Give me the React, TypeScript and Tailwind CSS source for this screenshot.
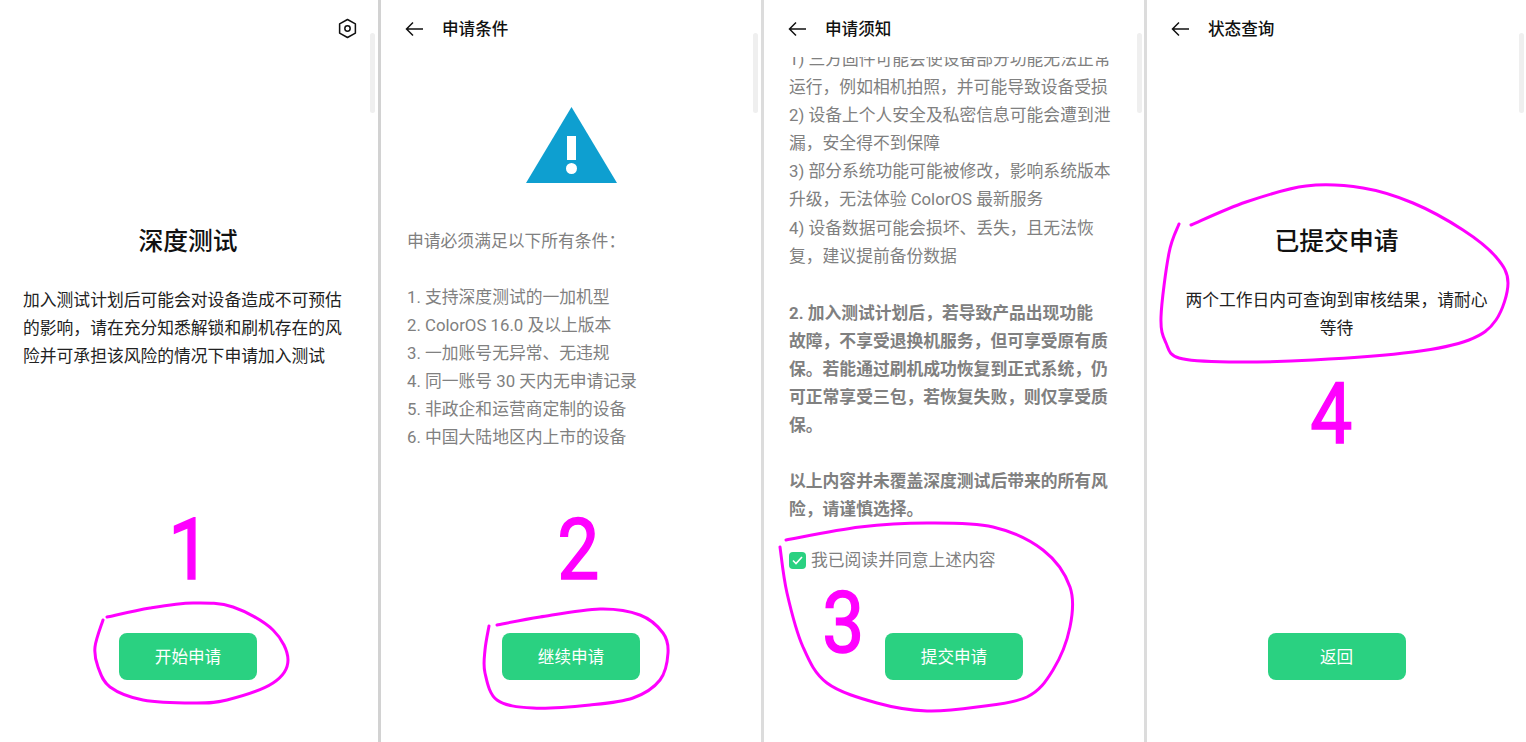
import type { ReactNode } from 'react';

const FONT = 'font-["Roboto","Noto_Sans_CJK_SC",sans-serif]';

// hand-drawn circles around the buttons, in page coordinates
const scribbles: [number, number][][] = [
    [[107, 617], [150, 608], [193, 603], [233, 607], [273, 630], [288, 660], [273, 683], [227, 700], [193, 703], [143, 700], [110, 687], [98, 667], [95, 647], [103, 620]],
    [[497, 625], [540, 617], [600, 609], [640, 615], [663, 633], [668, 653], [660, 680], [633, 698], [590, 705], [533, 708], [497, 700], [485, 673], [485, 650], [489, 626]],
    [[786, 540], [860, 527], [927, 523], [993, 527], [1043, 550], [1070, 587], [1070, 627], [1053, 670], [1027, 697], [977, 707], [927, 711], [877, 703], [827, 683], [803, 647], [787, 593], [780, 547]],
    [[1191, 225], [1246, 202], [1306, 186], [1363, 188], [1413, 203], [1463, 230], [1496, 257], [1508, 283], [1496, 320], [1469, 340], [1413, 352], [1313, 360], [1229, 362], [1179, 358], [1166, 343], [1161, 317], [1169, 253], [1179, 224]],
];

function smoothPath(pts: [number, number][]) {
    let d = `M${pts[0][0]} ${pts[0][1]}`;
    for (let i = 0; i < pts.length - 1; i++) {
        const p0 = pts[Math.max(i - 1, 0)];
        const p1 = pts[i];
        const p2 = pts[i + 1];
        const p3 = pts[Math.min(i + 2, pts.length - 1)];
        const c1x = p1[0] + (p2[0] - p0[0]) / 6;
        const c1y = p1[1] + (p2[1] - p0[1]) / 6;
        const c2x = p2[0] - (p3[0] - p1[0]) / 6;
        const c2y = p2[1] - (p3[1] - p1[1]) / 6;
        d += ` C${c1x} ${c1y} ${c2x} ${c2y} ${p2[0]} ${p2[1]}`;
    }
    return d;
}

function BackHeader({ title }: { title: string }) {
    return (
        <div className="flex h-[57px] shrink-0 items-center gap-[18px] pl-[24px]">
            <svg width="19" height="16" viewBox="0 0 19 16" fill="none" stroke="#111" strokeWidth="1.5">
                <path d="M18 8H1.5M8 1.5 1.5 8 8 14.5" />
            </svg>
            <span className="pt-[4px] text-[16.6px] font-medium text-[#111]">{title}</span>
        </div>
    );
}

function GreenButton({ children }: { children: ReactNode }) {
    return (
        <button className="mt-auto mb-[62px] flex h-[47px] w-[138px] shrink-0 items-center justify-center self-center rounded-[8px] bg-[#2ad181] pt-[4px] text-[16.6px] text-white">
            {children}
        </button>
    );
}

function ScrollThumb({ className }: { className: string }) {
    return <div className={`absolute top-[33px] h-[80px] w-[5px] rounded-full bg-[#efefef] ${className}`} />;
}

function StepNumber({ className, children }: { className: string; children: ReactNode }) {
    return (
        <span className={`absolute scale-x-[0.87] text-[86px] leading-[86px] font-normal text-[#ff00ff] [-webkit-text-stroke:1.6px_#ff00ff] ${className}`}>
            {children}
        </span>
    );
}

export default function App() {
    return (
        <div className={`relative flex h-[742px] w-[1526px] overflow-hidden bg-white ${FONT}`}>
            {/* Step 1 */}
            <div className="relative flex w-[381px] shrink-0 flex-col border-r-[3px] border-[#d2d2d2] pr-[2px]">
                <div className="flex h-[57px] shrink-0 items-center justify-end pr-[19px]">
                    <svg width="19" height="21" viewBox="0 0 20 22" fill="none" stroke="#111" strokeWidth="1.6">
                        <path d="M10 1.5 18.3 6.2V15.8L10 20.5 1.7 15.8V6.2Z" strokeLinejoin="round" />
                        <circle cx="10" cy="11" r="2.8" />
                    </svg>
                </div>
                <h1 className="mt-[168px] text-center text-[24.8px] leading-[34px] font-medium text-[#111]">深度测试</h1>
                <p className="mt-[27px] pr-[28px] pl-[23px] text-[16.8px] leading-[28px] text-[#222]">
                    加入测试计划后可能会对设备造成不可预估的影响，请在充分知悉解锁和刷机存在的风险并可承担该风险的情况下申请加入测试
                </p>
                <GreenButton>开始申请</GreenButton>
                <ScrollThumb className="left-[370px]" />
            </div>

            {/* Step 2 */}
            <div className="relative flex w-[383px] shrink-0 flex-col border-r-[3px] border-[#dcdcdc]">
                <BackHeader title="申请条件" />
                <svg className="mt-[50px] shrink-0 self-center" width="91" height="76" viewBox="0 0 91 76">
                    <path d="M45.5 0 91 76H0Z" fill="#0e9fd0" />
                    <rect x="41" y="29" width="9" height="24" fill="#fff" />
                    <circle cx="45.5" cy="61.5" r="5.5" fill="#fff" />
                </svg>
                <div className="mt-[44px] px-[26px] text-[16.8px] leading-[28px] text-[#808080]">
                    <p>申请必须满足以下所有条件：</p>
                    <ul className="mt-[28px]">
                        <li>1. 支持深度测试的一加机型</li>
                        <li>2. ColorOS 16.0 及以上版本</li>
                        <li>3. 一加账号无异常、无违规</li>
                        <li>4. 同一账号 30 天内无申请记录</li>
                        <li>5. 非政企和运营商定制的设备</li>
                        <li>6. 中国大陆地区内上市的设备</li>
                    </ul>
                </div>
                <GreenButton>继续申请</GreenButton>
                <ScrollThumb className="left-[372px]" />
            </div>

            {/* Step 3 */}
            <div className="relative flex w-[383px] shrink-0 flex-col border-r-[3px] border-[#dcdcdc]">
                <BackHeader title="申请须知" />
                <div className="h-[466px] shrink-0 overflow-hidden">
                    <div className="-mt-[12px] pr-[26px] pl-[25px] text-[16.8px] leading-[28.1px] text-[#808080]">
                        <p>1) 三方固件可能会使设备部分功能无法正常运行，例如相机拍照，并可能导致设备受损</p>
                        <p>2) 设备上个人安全及私密信息可能会遭到泄漏，安全得不到保障</p>
                        <p>3) 部分系统功能可能被修改，影响系统版本升级，无法体验 ColorOS 最新服务</p>
                        <p>4) 设备数据可能会损坏、丢失，且无法恢复，建议提前备份数据</p>
                        <p className="mt-[29px] font-bold">
                            2. 加入测试计划后，若导致产品出现功能
                            <br />
                            故障，不享受退换机服务，但可享受原有质保。若能通过刷机成功恢复到正式系统，仍可正常享受三包，若恢复失败，则仅享受质保。
                        </p>
                        <p className="mt-[28px] font-bold">以上内容并未覆盖深度测试后带来的所有风险，请谨慎选择。</p>
                    </div>
                </div>
                <div className="mt-[25px] flex items-center gap-[5px] pl-[25px] text-[16.8px] leading-[24px] text-[#808080]">
                    <span className="flex h-[17px] w-[17px] items-center justify-center rounded-[4px] bg-[#2ad181]">
                        <svg width="11" height="9" viewBox="0 0 11 9" fill="none" stroke="#fff" strokeWidth="1.6">
                            <path d="M1 4.5 4 7.5 10 1" />
                        </svg>
                    </span>
                    我已阅读并同意上述内容
                </div>
                <GreenButton>提交申请</GreenButton>
                <ScrollThumb className="left-[373px]" />
            </div>

            {/* Step 4 */}
            <div className="relative flex min-w-0 flex-1 flex-col">
                <BackHeader title="状态查询" />
                <h1 className="mt-[168px] text-center text-[24.8px] leading-[34px] font-medium text-[#111]">已提交申请</h1>
                <p className="mt-[27px] px-[33px] text-center text-[16.8px] leading-[28px] text-[#222]">
                    两个工作日内可查询到审核结果，请耐心等待
                </p>
                <GreenButton>返回</GreenButton>
                <ScrollThumb className="left-[372px]" />
            </div>

            {/* Annotations drawn over the screenshots */}
            <svg className="pointer-events-none absolute inset-0" width="1526" height="742" viewBox="0 0 1526 742" fill="none" stroke="#ff00ff" strokeWidth="3" strokeLinecap="round">
                {scribbles.map((pts, i) => (
                    <path key={i} d={smoothPath(pts)} />
                ))}
            </svg>
            <StepNumber className="top-[507px] left-[165px]">1</StepNumber>
            <StepNumber className="top-[507px] left-[554px]">2</StepNumber>
            <StepNumber className="top-[580px] left-[819px]">3</StepNumber>
            <StepNumber className="top-[371px] left-[1307px]">4</StepNumber>
        </div>
    );
}
